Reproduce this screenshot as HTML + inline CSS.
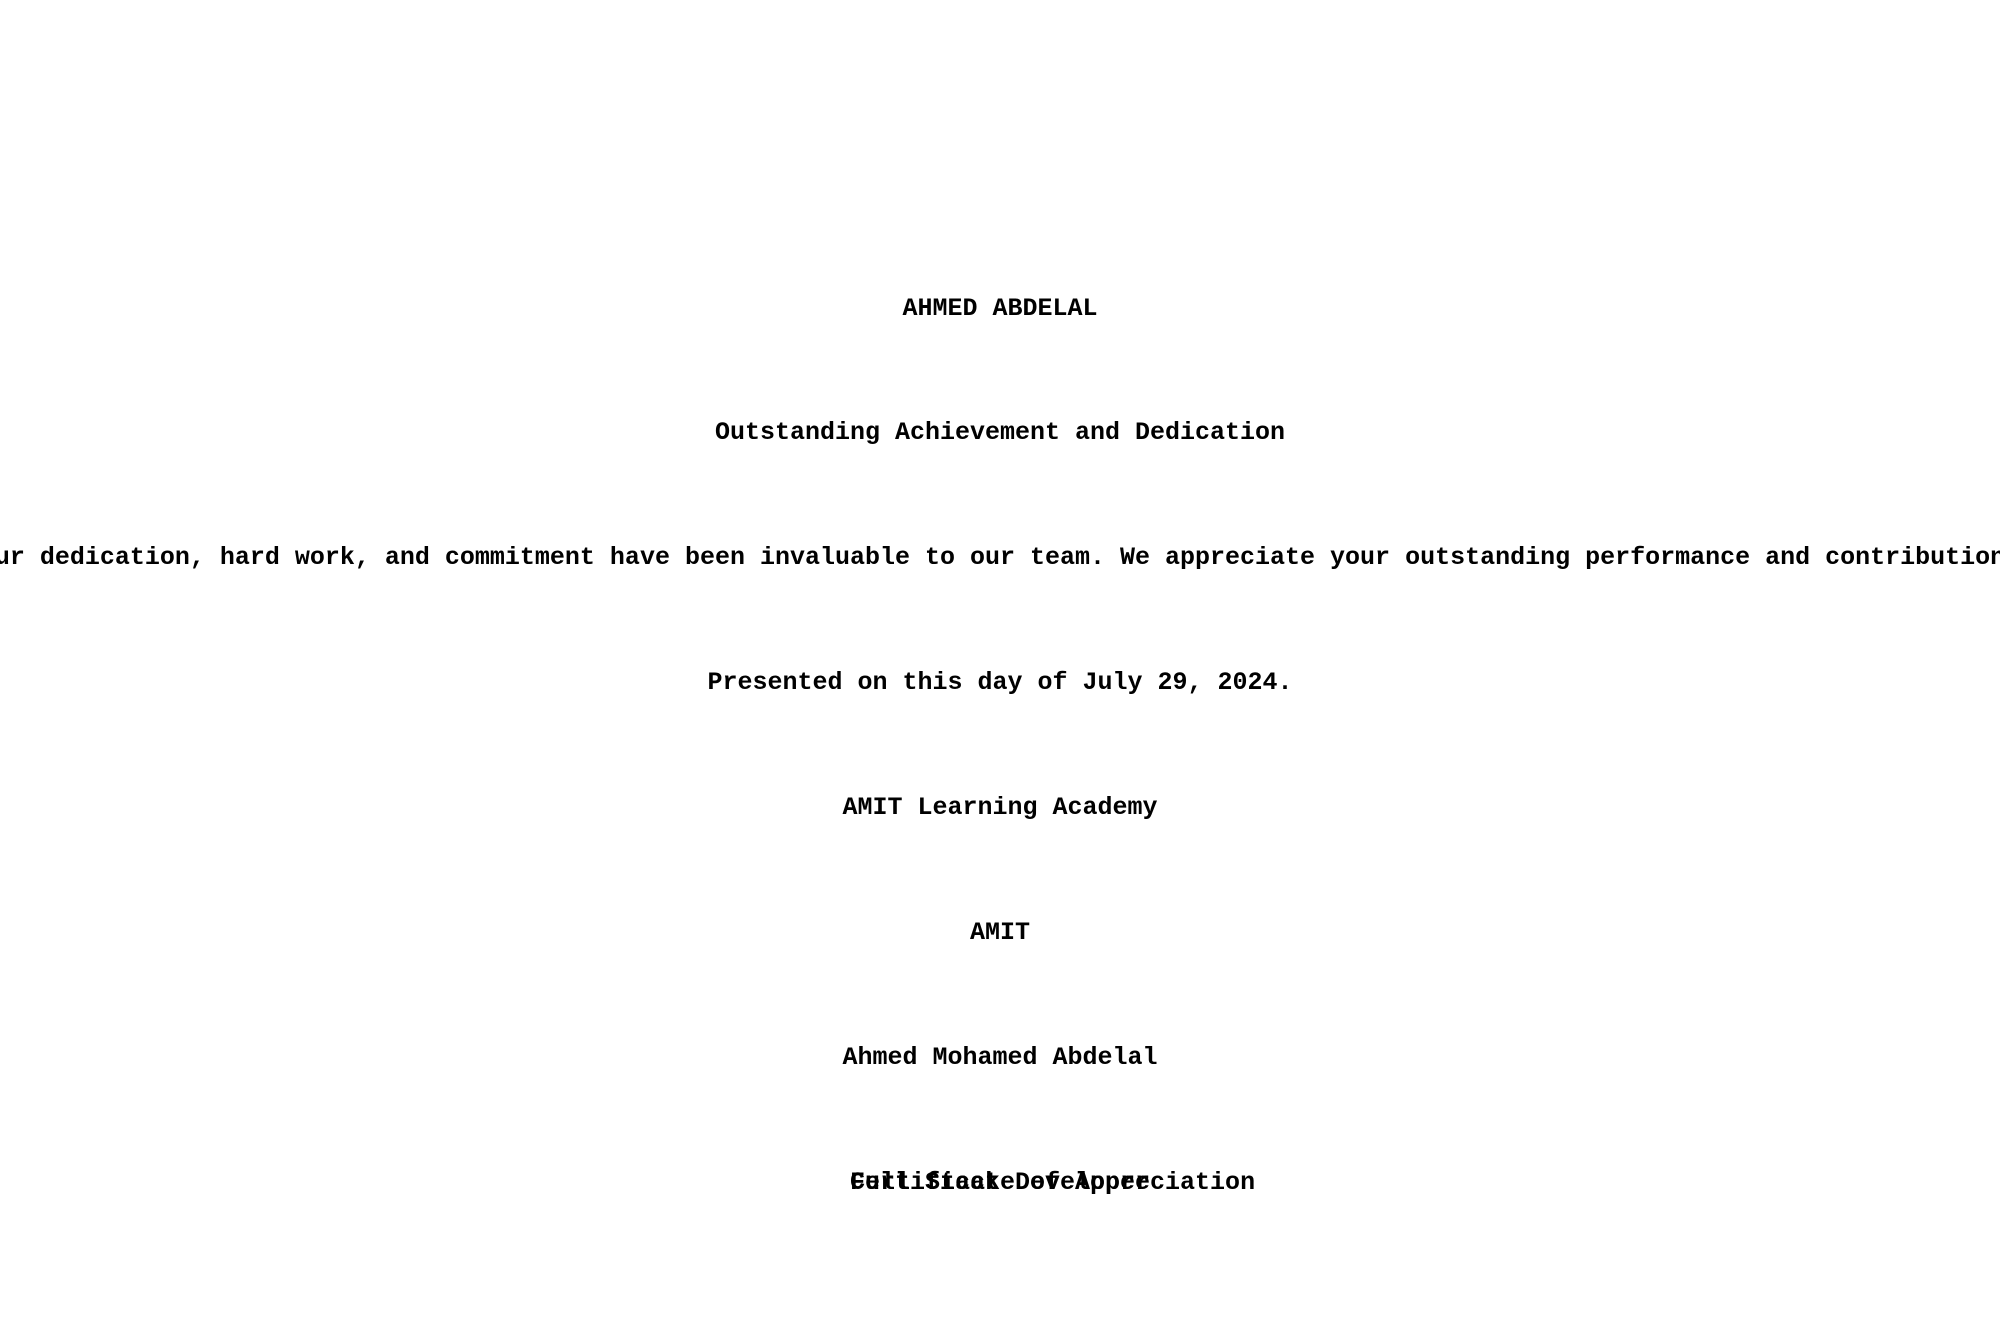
<!DOCTYPE html>
<html><head><meta charset="utf-8"><style>
html,body{margin:0;padding:0;background:#fff;width:2000px;height:1333px;overflow:hidden;position:relative}
.l{position:absolute;left:0;width:2000px;height:40px;line-height:40px;display:flex;justify-content:center;white-space:nowrap;font-family:"Liberation Mono",monospace;font-weight:bold;font-size:25px;color:#000}
.ov{position:absolute;left:850px;top:1163px;height:40px;line-height:40px;font-family:"Liberation Mono",monospace;font-weight:bold;font-size:25px;white-space:nowrap}
</style></head><body>
<div class="l" style="top:289px">AHMED ABDELAL</div>
<div class="l" style="top:413px">Outstanding Achievement and Dedication</div>
<div class="l" style="top:538px"><span>Your dedication, hard work, and commitment have been invaluable to our team. We appreciate your outstanding performance and contributions.</span></div>
<div class="l" style="top:663px">Presented on this day of July 29, 2024.</div>
<div class="l" style="top:788px">AMIT Learning Academy</div>
<div class="l" style="top:913px">AMIT</div>
<div class="l" style="top:1038px">Ahmed Mohamed Abdelal</div>
<div class="ov">Certificate of Appreciation</div>
<div class="ov">Full Stack Developer</div>
</body></html>
